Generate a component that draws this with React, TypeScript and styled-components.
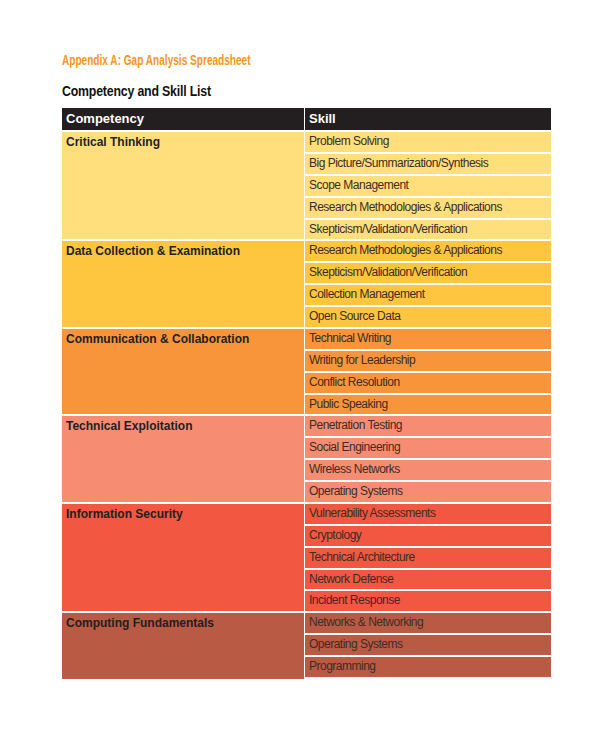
import styled, { createGlobalStyle } from 'styled-components';

const GlobalStyle = createGlobalStyle`
  body {
    margin: 0;
    background: #ffffff;
    font-family: "Liberation Sans", Arial, sans-serif;
  }
`

type Group = { name: string; color: string; skills: string[] }

const groups: Group[] = [
  {
    name: 'Critical Thinking',
    color: '#fedf7c',
    skills: [
      'Problem Solving',
      'Big Picture/Summarization/Synthesis',
      'Scope Management',
      'Research Methodologies & Applications',
      'Skepticism/Validation/Verification',
    ],
  },
  {
    name: 'Data Collection & Examination',
    color: '#fec53f',
    skills: [
      'Research Methodologies & Applications',
      'Skepticism/Validation/Verification',
      'Collection Management',
      'Open Source Data',
    ],
  },
  {
    name: 'Communication & Collaboration',
    color: '#f8953b',
    skills: ['Technical Writing', 'Writing for Leadership', 'Conflict Resolution', 'Public Speaking'],
  },
  {
    name: 'Technical Exploitation',
    color: '#f68d73',
    skills: ['Penetration Testing', 'Social Engineering', 'Wireless Networks', 'Operating Systems'],
  },
  {
    name: 'Information Security',
    color: '#f15741',
    skills: [
      'Vulnerability Assessments',
      'Cryptology',
      'Technical Architecture',
      'Network Defense',
      'Incident Response',
    ],
  },
  {
    name: 'Computing Fundamentals',
    color: '#b95b44',
    skills: ['Networks & Networking', 'Operating Systems', 'Programming', ''],
  },
]

const Page = styled.div`
  padding: 51px 0 0 62px;
  width: 489px;
`

// condensed bold heading, no narrow face installed so squeeze it
const Title = styled.h1`
  margin: 0;
  display: block;
  width: max-content;
  font-size: 14px;
  font-weight: 700;
  color: #f7941e;
  line-height: 18px;
  transform: scaleX(0.72);
  transform-origin: left center;
  white-space: nowrap;
`

const Subtitle = styled.h2`
  margin: 13px 0 0;
  width: max-content;
  font-size: 14px;
  font-weight: 700;
  color: #111;
  line-height: 18px;
  letter-spacing: -0.2px;
  transform: scaleX(0.88);
  transform-origin: left center;
`

const Table = styled.div`
  margin-top: 8px;
  height: 571px;
  overflow: hidden;
`

const HeaderRow = styled.div`
  display: grid;
  grid-template-columns: 242px 1fr;
  background: #231f20;
  height: 22px;
`

const HeaderCell = styled.div<{ $divider?: boolean }>`
  color: #fff;
  font-weight: 700;
  font-size: 13px;
  line-height: 22px;
  padding-left: 4px;
  border-left: ${p => (p.$divider ? '1px solid #fff' : 'none')};
`

const GroupRow = styled.div<{ $color: string }>`
  display: grid;
  grid-template-columns: 242px 1fr;
  background: ${p => p.$color};
  border-top: 2px solid #fff;
`

const Competency = styled.div`
  font-weight: 700;
  font-size: 12px;
  color: #231f20;
  padding: 3px 0 0 4px;
  line-height: 14px;
`

const Skills = styled.div`
  border-left: 1px solid #fff;
`

const Skill = styled.div`
  height: 19.88px;
  line-height: 19.88px;
  padding-left: 4px;
  font-size: 12px;
  color: #3d2c24;
  letter-spacing: -0.5px;
  white-space: nowrap;
  & + & {
    border-top: 2px solid #fff;
  }
`

export default function App() {
  return (
    <>
      <GlobalStyle />
      <Page>
        <Title>Appendix A: Gap Analysis Spreadsheet</Title>
        <Subtitle>Competency and Skill List</Subtitle>
        <Table>
          <HeaderRow>
            <HeaderCell>Competency</HeaderCell>
            <HeaderCell $divider>Skill</HeaderCell>
          </HeaderRow>
          {groups.map(g => (
            <GroupRow key={g.name} $color={g.color}>
              <Competency>{g.name}</Competency>
              <Skills>
                {g.skills.map((s, i) => (
                  <Skill key={i}>{s}</Skill>
                ))}
              </Skills>
            </GroupRow>
          ))}
        </Table>
      </Page>
    </>
  )
}
